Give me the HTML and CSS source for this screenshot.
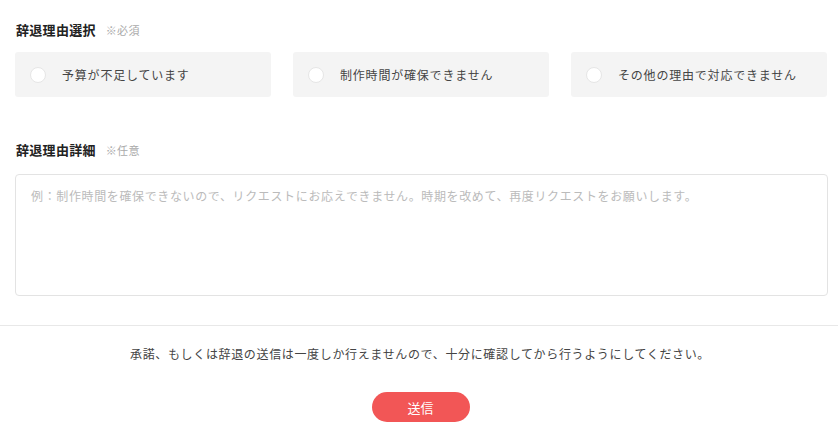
FILE: index.html
```html
<!DOCTYPE html>
<html lang="ja">
<head>
<meta charset="utf-8">
<title>辞退理由</title>
<link rel="stylesheet" href="styles.css">
</head>
<body>
<form class="form">
  <div class="content">
    <div class="label">辞退理由選択<span class="note">※必須</span></div>
    <div class="options">
      <label class="option"><span class="radio"></span><span class="option-text">予算が不足しています</span></label>
      <label class="option"><span class="radio"></span><span class="option-text">制作時間が確保できません</span></label>
      <label class="option"><span class="radio"></span><span class="option-text">その他の理由で対応できません</span></label>
    </div>
    <div class="label label-second">辞退理由詳細<span class="note">※任意</span></div>
    <textarea class="detail" placeholder="例：制作時間を確保できないので、リクエストにお応えできません。時期を改めて、再度リクエストをお願いします。"></textarea>
  </div>
  <div class="footer">
    <p class="warning">承諾、もしくは辞退の送信は一度しか行えませんので、十分に確認してから行うようにしてください。</p>
    <button type="button" class="submit">送信</button>
  </div>
</form>
</body>
</html>
```
FILE: styles.css
```css
* { box-sizing: border-box; }
html, body {
  margin: 0;
  padding: 0;
  background: #fff;
  font-family: "Noto Sans CJK JP", "Noto Sans", sans-serif;
  color: #333;
}
.content {
  padding: 20px 10px 0 15px;
}
.label {
  display: flex;
  align-items: center;
  height: 20px;
  font-size: 13px;
  line-height: 20px;
  font-weight: 700;
  color: #222;
  letter-spacing: 0.3px;
  padding-left: 1px;
}
.note {
  font-size: 11px;
  line-height: 20px;
  font-weight: 400;
  color: #aaa;
  margin-left: 10px;
  letter-spacing: 0.3px;
}
.options {
  display: grid;
  grid-template-columns: 256px 256px 256px;
  column-gap: 22px;
  margin-top: 12px;
  margin-right: 1px;
}
.option {
  display: flex;
  align-items: center;
  height: 45px;
  background: #f4f4f4;
  border-radius: 3px;
  padding-left: 15px;
}
.radio {
  width: 16px;
  height: 16px;
  border-radius: 50%;
  background: #fff;
  border: 1px solid #e6e6e6;
  flex: none;
}
.option-text {
  margin-left: 16px;
  font-size: 12px;
  letter-spacing: 0.8px;
  color: #444;
  line-height: 18px;
}
.label-second {
  margin-top: 43px;
}
.detail {
  display: block;
  width: 100%;
  height: 122px;
  margin-top: 14px;
  border: 1px solid #e3e3e3;
  border-radius: 4px;
  padding: 12px 15px;
  font-family: "Noto Sans CJK JP", "Noto Sans", sans-serif;
  font-size: 12px;
  line-height: 18px;
  letter-spacing: 0.63px;
  resize: none;
  outline: none;
  color: #333;
}
.detail::placeholder {
  color: #bbb;
}
.footer {
  margin-top: 29px;
  border-top: 1px solid #e8e8e8;
  display: flex;
  flex-direction: column;
  align-items: center;
}
.warning {
  margin: 18px 0 0;
  font-size: 12px;
  line-height: 20px;
  letter-spacing: 0.65px;
  color: #444;
  padding-left: 2px;
}
.submit {
  margin-top: 28px;
  width: 98px;
  height: 30px;
  border: none;
  border-radius: 15px;
  background: #f25656;
  color: #fff;
  font-family: "Noto Sans CJK JP", "Noto Sans", sans-serif;
  font-size: 13px;
  padding: 0;
  margin-left: 3px;
}
```
